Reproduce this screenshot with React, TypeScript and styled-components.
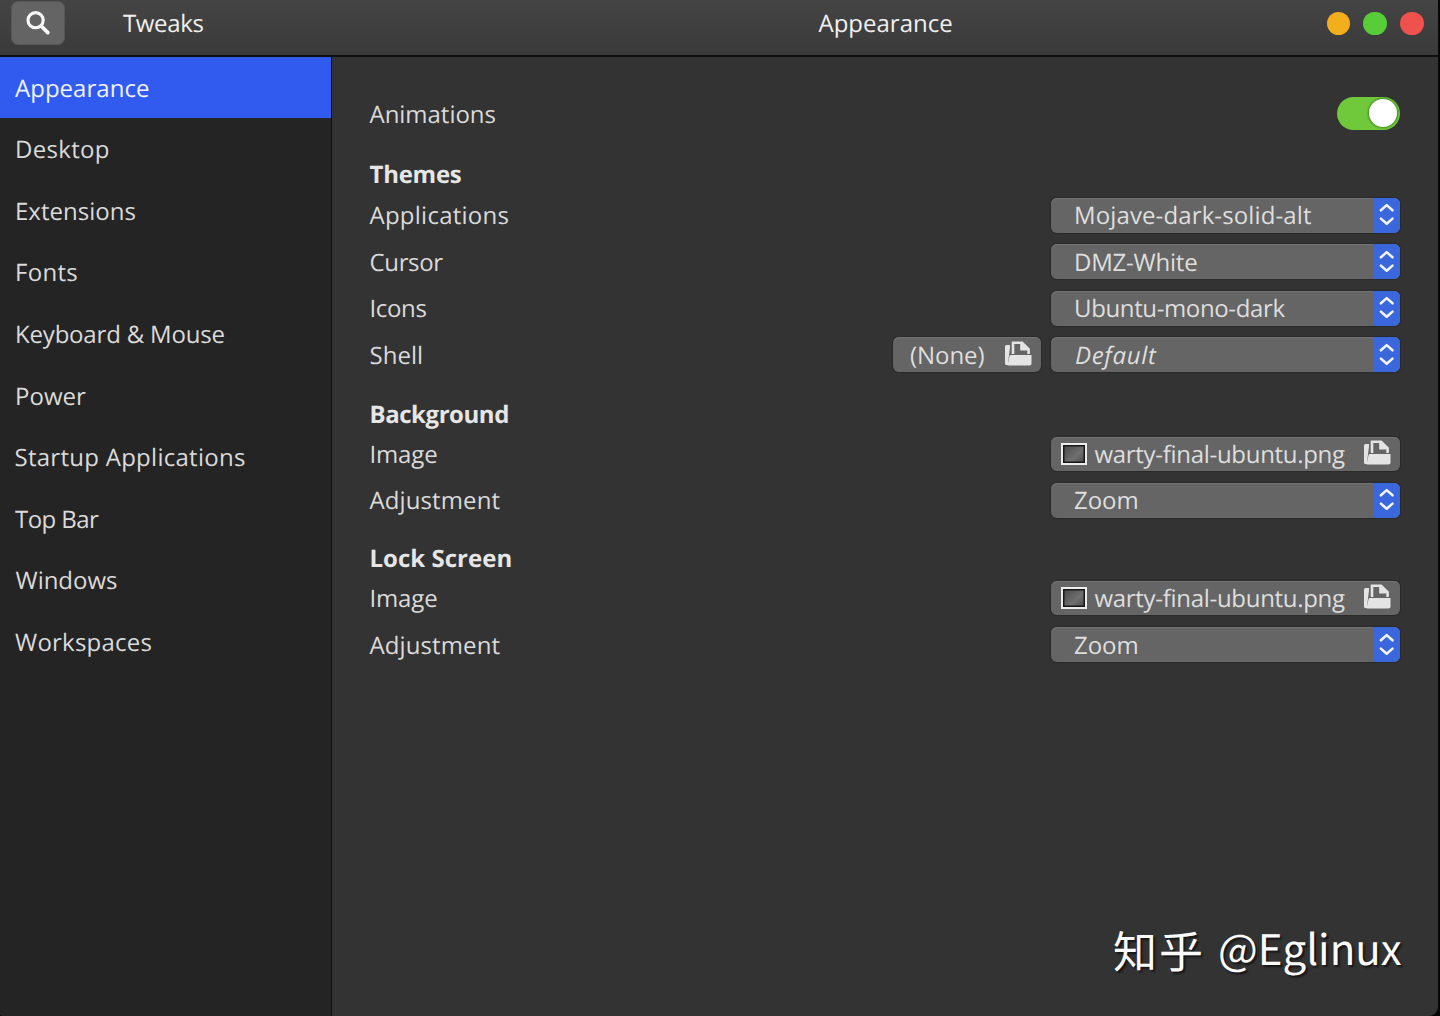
import React from "react";
import styled, { createGlobalStyle } from "styled-components";

const GlobalStyle = createGlobalStyle`
  * { box-sizing: border-box; }
  body {
    margin: 0;
    background: #070707;
    color: #dadada;
    font: 24px/34px "Open Sans", "Noto Sans", sans-serif;
    text-rendering: geometricPrecision;
    overflow: hidden;
  }
`;

const Window = styled.div`
  position: relative;
  display: flex;
  flex-direction: column;
  width: 1438px;
  height: 1016px;
  background: #333333;
  border-radius: 0 0 9px 3px;
  overflow: hidden;
`;

const HeaderBar = styled.header`
  display: grid;
  grid-template-columns: 123px 209px 1fr;
  flex: none;
  height: 57px;
  padding-bottom: 8px;
  background: linear-gradient(#444444, #3a3a3a);
  border-bottom: 2px solid #0f0f0f;
`;

const SearchButton = styled.button`
  display: flex;
  align-items: center;
  justify-content: center;
  width: 54px;
  height: 44px;
  margin: 1px 0 0 11px;
  padding: 0;
  border: 1px solid #565656;
  border-radius: 7px;
  background: #646464;
`;

const Title = styled.div<{ $track?: number }>`
  color: #f0f0f0;
  line-height: 48px;
  white-space: nowrap;
  letter-spacing: ${(p) => p.$track ?? 0}px;
`;

const TitleArea = styled.div`
  display: flex;
  align-items: flex-start;
  justify-content: space-between;
  padding: 0 14.5px 0 486.5px;
`;

const WindowControls = styled.div`
  display: flex;
  gap: 13px;
  padding-top: 11.5px;
`;

const Dot = styled.span<{ $color: string }>`
  width: 23.6px;
  height: 23.6px;
  border-radius: 50%;
  background: ${(p) => p.$color};
`;

const Body = styled.div`
  display: flex;
  flex: 1;
  min-height: 0;
`;

const Sidebar = styled.nav`
  flex: none;
  width: 332px;
  background: #242424;
  border-right: 1.5px solid #101010;
`;

const NavItem = styled.div<{ $active?: boolean; $track: number; $indent?: number }>`
  height: 61.55px;
  padding-left: ${(p) => p.$indent ?? 14.5}px;
  line-height: 63px;
  white-space: nowrap;
  letter-spacing: ${(p) => p.$track}px;
  color: ${(p) => (p.$active ? "#eef2ff" : "#dadada")};
  background: ${(p) => (p.$active ? "#315bef" : "transparent")};

  &:first-child {
    height: 61.4px;
  }
`;

const Content = styled.main`
  flex: 1;
  padding: 33px 38px 0 37.5px;
`;

const Row = styled.div`
  display: flex;
  align-items: center;
  justify-content: space-between;
  height: 46.55px;
`;

const Label = styled.span<{ $track: number; $drop?: number }>`
  padding-top: ${(p) => p.$drop ?? 2}px;
  white-space: nowrap;
  letter-spacing: ${(p) => p.$track}px;
`;

const Heading = styled.h2<{ $track: number; $height: number; $top: number }>`
  height: ${(p) => p.$height}px;
  margin: 0;
  padding-top: ${(p) => p.$top}px;
  font-size: 24px;
  line-height: 34px;
  font-weight: 700;
  color: #e6e6e6;
  letter-spacing: ${(p) => p.$track}px;
`;

const Switch = styled.span`
  display: flex;
  justify-content: flex-end;
  align-items: center;
  width: 63px;
  height: 33px;
  padding-right: 3px;
  border-radius: 17px;
  background: #6fc93a;
`;

const Knob = styled.span`
  width: 28px;
  height: 28px;
  border-radius: 50%;
  background: #ffffff;
  box-shadow: 0 0 2px 1px rgba(40, 90, 20, 0.6);
`;

const Controls = styled.div`
  display: flex;
  gap: 10px;
`;

const Field = styled.div`
  display: flex;
  align-items: center;
  height: 35px;
  border-radius: 6px;
  background: #656565;
  box-shadow: inset 0 1px 0 #747474, 0 0 1px 1px #2a2a2a;
  overflow: hidden;
`;

const Select = styled(Field)`
  justify-content: space-between;
  width: 349px;
  padding-left: 23px;
`;

const Stepper = styled.span`
  display: flex;
  align-items: center;
  justify-content: center;
  width: 27px;
  height: 35px;
  background: #3b67dc;
`;

const Value = styled.span<{ $track: number; $italic?: boolean }>`
  padding-top: 2px;
  padding-left: ${(p) => (p.$italic ? 1 : 0)}px;
  white-space: nowrap;
  letter-spacing: ${(p) => p.$track}px;
  font-style: ${(p) => (p.$italic ? "italic" : "normal")};
  color: #dedede;
`;

const ShellButton = styled(Field)`
  justify-content: space-between;
  width: 148px;
  padding: 0 9.5px 0 17px;
`;

const FileButton = styled(Field)`
  width: 349px;
  height: 34px;
  padding: 0 9.5px 0 10px;
`;

const Thumbnail = styled.span`
  width: 26px;
  height: 22px;
  margin-right: 7.5px;
  border: 2.5px solid #ececec;
  background: linear-gradient(135deg, #454545, #707070 60%, #484848);
  box-shadow: inset 0 0 0 1.5px #161616;
`;

const FileName = styled(Value)`
  flex: 1;
`;

const Watermark = styled.div`
  position: absolute;
  top: 918px;
  left: 1113px;
  display: flex;
  font: 42px/60px "Noto Sans CJK SC", sans-serif;
  color: #fbfbfb;
  white-space: nowrap;
  text-shadow: 2px 2px 2px rgba(0, 0, 0, 0.6);
`;

const Brand = styled.span`
  width: 105px;
  padding-top: 1px;
  font-size: 44px;
  letter-spacing: 2px;
`;

const Search = styled.svg`
  display: block;
`;

const Folder = styled.svg`
  flex: none;
  margin-bottom: 3px;
`;

const SearchIcon = () => (
  <Search width="26" height="26" viewBox="0 0 26 26" fill="none" stroke="#fafafa" strokeLinecap="round">
    <circle cx="10.6" cy="10.2" r="7.6" strokeWidth="3.1" />
    <path d="M16.2 16L22.8 22.6" strokeWidth="3.8" />
  </Search>
);

const FolderIcon = () => (
  <Folder width="28" height="27" viewBox="0 0 28 27">
    <path d="M1 6.5Q1 5 2.5 5H6V7.5L4.2 22V25H2.5Q1 25 1 23.5Z" fill="#e4e4e4" />
    <path d="M9 14V2.8H18L24.6 9.4V14" fill="none" stroke="#e4e4e4" strokeWidth="2.6" />
    <path d="M16.2 2V10.6H25Z" fill="#e4e4e4" />
    <path d="M6.5 15H27.5V23.5Q27.5 25.5 25.5 25.5H3.5L5.5 16Z" fill="#e4e4e4" />
  </Folder>
);

const Chevrons = () => (
  <svg width="15" height="24" viewBox="0 0 15 24" fill="none" stroke="#f2f5ff" strokeWidth="2.5" strokeLinecap="round" strokeLinejoin="round">
    <path d="M1.9 7.3L7.7 2.1L13.5 7.3" />
    <path d="M1.9 15.6L7.7 20.8L13.5 15.6" />
  </svg>
);

const Dropdown = ({ text, track, italic }: { text: string; track: number; italic?: boolean }) => (
  <Select>
    <Value $track={track} $italic={italic}>{text}</Value>
    <Stepper><Chevrons /></Stepper>
  </Select>
);

const FileChooser = () => (
  <FileButton>
    <Thumbnail />
    <FileName $track={-0.3}>warty-final-ubuntu.png</FileName>
    <FolderIcon />
  </FileButton>
);

const navigation = [
  { text: "Appearance", track: 0.02, indent: 15, active: true },
  { text: "Desktop", track: 0.3, indent: 15 },
  { text: "Extensions", track: 0.02, indent: 15 },
  { text: "Fonts", track: 0.3, indent: 15 },
  { text: "Keyboard & Mouse", track: -0.19, indent: 15 },
  { text: "Power", track: 0.01, indent: 15 },
  { text: "Startup Applications", track: 0.27 },
  { text: "Top Bar", track: -0.55, indent: 15 },
  { text: "Windows", track: -0.03, indent: 15.5 },
  { text: "Workspaces", track: 0.23, indent: 15 },
];

export default function App() {
  return (
    <>
      <GlobalStyle />
      <Window>
        <HeaderBar>
          <SearchButton aria-label="Search"><SearchIcon /></SearchButton>
          <Title $track={-0.35}>Tweaks</Title>
          <TitleArea>
            <Title>Appearance</Title>
            <WindowControls>
              <Dot $color="#f2ae1c" />
              <Dot $color="#57cd37" />
              <Dot $color="#ef514c" />
            </WindowControls>
          </TitleArea>
        </HeaderBar>
        <Body>
          <Sidebar>
            {navigation.map((item) => (
              <NavItem key={item.text} $active={item.active} $track={item.track} $indent={item.indent}>
                {item.text}
              </NavItem>
            ))}
          </Sidebar>
          <Content>
            <Row>
              <Label $track={-0.03} $drop={4}>Animations</Label>
              <Switch><Knob /></Switch>
            </Row>
            <Heading $track={-0.25} $height={55.5} $top={21}>Themes</Heading>
            <Row>
              <Label $track={0.25}>Applications</Label>
              <Dropdown text="Mojave-dark-solid-alt" track={0.12} />
            </Row>
            <Row>
              <Label $track={-0.35}>Cursor</Label>
              <Dropdown text="DMZ-White" track={-0.22} />
            </Row>
            <Row>
              <Label $track={-0.34}>Icons</Label>
              <Dropdown text="Ubuntu-mono-dark" track={-0.37} />
            </Row>
            <Row>
              <Label $track={0.02}>Shell</Label>
              <Controls>
                <ShellButton>
                  <Value $track={-0.06}>(None)</Value>
                  <FolderIcon />
                </ShellButton>
                <Dropdown text="Default" track={0.68} italic />
              </Controls>
            </Row>
            <Heading $track={-0.45} $height={52.3} $top={19.3}>Background</Heading>
            <Row>
              <Label $track={-0.15}>Image</Label>
              <FileChooser />
            </Row>
            <Row>
              <Label $track={0.11}>Adjustment</Label>
              <Dropdown text="Zoom" track={-0.04} />
            </Row>
            <Heading $track={0.02} $height={51.5} $top={18.3}>Lock Screen</Heading>
            <Row>
              <Label $track={-0.15}>Image</Label>
              <FileChooser />
            </Row>
            <Row>
              <Label $track={0.11}>Adjustment</Label>
              <Dropdown text="Zoom" track={-0.04} />
            </Row>
          </Content>
        </Body>
        <Watermark>
          <Brand>知乎</Brand>
          <span>@Eglinux</span>
        </Watermark>
      </Window>
    </>
  );
}
